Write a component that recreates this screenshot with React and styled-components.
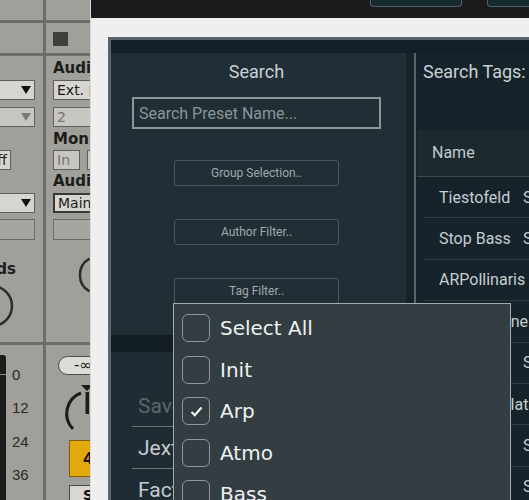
import React from 'react'
import styled, { createGlobalStyle } from 'styled-components'

const GlobalStyle = createGlobalStyle`
  html, body {
    margin: 0;
    padding: 0;
    background: #efefef;
  }
  body {
    font-family: Roboto, "Liberation Sans", sans-serif;
  }
`

const Page = styled.div`
  position: relative;
  display: flex;
  width: 529px;
  height: 500px;
  overflow: hidden;
`

/* ---------- Live device strip on the left ---------- */

const Live = styled.div`
  flex: 0 0 90px;
  display: grid;
  grid-template-columns: 43px 44px;
  grid-template-rows: 20px 30px 286px 1fr;
  gap: 3px;
  background: #6e6d69;
  font-family: "DejaVu Sans", Verdana, sans-serif;
  color: #1c1c1a;
`
const Cell = styled.div`
  background: #a09f9a;
  overflow: hidden;
  min-width: 0;
  display: flex;
  flex-direction: ${p => (p.$row ? 'row' : 'column')};
  box-sizing: border-box;
  padding: ${p => p.$pad || '0'};
`
const ArmSquare = styled.div`
  width: 15px;
  height: 14px;
  margin: 9px 0 0 7px;
  background: #403f3b;
`
const Drop = styled.div`
  flex: none;
  display: flex;
  align-items: center;
  justify-content: ${p => (p.$end ? 'flex-end' : 'flex-start')};
  box-sizing: border-box;
  width: ${p => p.$w || 45}px;
  height: ${p => p.$h || 20}px;
  margin: ${p => p.$m || '0'};
  padding: 0 3px 0 3px;
  background: ${p => (p.$dim ? '#c7c6c0' : '#d6d5cf')};
  border: ${p => (p.$heavy ? '2px solid #3a3935' : '1px solid #5f5e5a')};
  font-size: 14px;
  color: ${p => (p.$dim ? '#76756f' : '#1c1c1a')};
  white-space: nowrap;
`
const Arrow = styled.span`
  width: 0;
  height: 0;
  border-left: 5px solid transparent;
  border-right: 5px solid transparent;
  border-top: 8px solid ${p => (p.$dim ? '#7c7b76' : '#111')};
`
const Blank = styled.div`
  flex: none;
  box-sizing: border-box;
  width: 50px;
  height: 21px;
  margin: ${p => p.$m || '0'};
  background: #a6a59f;
  border: 1px solid #6c6b66;
`
const LiveLabel = styled.div`
  flex: none;
  font-size: 15px;
  font-weight: bold;
  line-height: 16px;
  white-space: nowrap;
  margin-top: ${p => p.$mt || 0}px;
`
const SendsLabel = styled(LiveLabel)`
  width: 60px;
  margin-left: -44px;
  text-align: right;
  line-height: 18px;
`
const InRow = styled.div`
  display: flex;
  gap: 7px;
  margin-top: 3px;
`
const Meter = styled.div`
  flex: 0 0 6px;
  margin-top: 10px;
  border-radius: 0 3px 0 0;
  background: linear-gradient(#1d1d1b 0 19px, #8a8985 19px 20px, #1d1d1b 20px);
`
const Scale = styled.div`
  margin-left: 6px;
  padding-top: 13px;
  font-family: "Liberation Sans", Arial, sans-serif;
  font-size: 15px;
  line-height: 33.3px;
  color: #2a2a28;
`
const Pill = styled.div`
  width: 52px;
  height: 19px;
  margin-left: 12px;
  box-sizing: border-box;
  border: 1px solid #4c4b47;
  border-radius: 10px;
  background: #dddcd6;
  font-size: 15px;
  line-height: 17px;
  padding-left: 15px;
  white-space: nowrap;
`
const ClipBox = styled.div`
  flex: none;
  width: 40px;
  height: ${p => p.$h}px;
  margin: ${p => p.$m};
  box-sizing: border-box;
  padding-left: 13px;
  background: ${p => p.$bg};
  border: 1px solid ${p => p.$line};
  font-size: ${p => p.$fs}px;
  font-weight: bold;
  line-height: ${p => p.$h - 2}px;
  color: #111;
`

const SendKnob = () => (
  <svg width="43" height="50" style={{ marginTop: 3, flex: 'none' }}>
    <circle cx="-8" cy="25" r="20" fill="none" stroke="#2d2c29" strokeWidth="2.5" />
  </svg>
)

const PanKnob = () => (
  <svg width="44" height="52" style={{ marginTop: 8, flex: 'none' }}>
    <path d="M36.5 10.5 A19 19 0 0 0 36.5 43.5" fill="none" stroke="#2d2c29" strokeWidth="2.5" />
    <path d="M38 45 L43 38" stroke="#2d2c29" strokeWidth="2.5" />
  </svg>
)

const VolKnob = () => (
  <svg width="44" height="56" style={{ marginTop: 8, flex: 'none' }}>
    <polygon points="35,2 47,2 41,8" fill="#1c1c1a" />
    <rect x="39.5" y="9" width="3.5" height="22" fill="#1c1c1a" />
    <path d="M35 10 A22 22 0 0 0 27 46" fill="none" stroke="#1c1c1a" strokeWidth="3" />
  </svg>
)

/* ---------- Host window + plugin ---------- */

const Host = styled.div`
  flex: 1;
  min-width: 0;
  display: flex;
  flex-direction: column;
  background: #efefef;
  border-left: 1px solid #d9d9d9;
`
const TitleBar = styled.div`
  flex: 0 0 18px;
  display: flex;
  gap: 25px;
  padding-left: 279px;
  background: #1b1b1b;
`
const BarButton = styled.div`
  flex: none;
  width: ${p => p.$w}px;
  height: 7px;
  box-sizing: border-box;
  background: #16292d;
  border: 1px solid #4b646a;
  border-top: none;
  border-radius: 0 0 4px 4px;
`
const Frame = styled.div`
  flex: 1;
  display: flex;
  padding: 19px 0 0 17px;
  min-height: 0;
  overflow: hidden;
`
const Plugin = styled.div`
  flex: none;
  width: 700px;
  display: flex;
  flex-direction: column;
  border-top: 3px solid #59636a;
  border-left: 3px solid #59636a;
  background: #17232a;
`
const Strip = styled.div`
  flex: 0 0 13px;
  background: #132027;
`
const Body = styled.div`
  flex: 1;
  display: flex;
`
const LeftCol = styled.div`
  flex: 0 0 295px;
  display: flex;
  flex-direction: column;
`
const SearchPanel = styled.div`
  flex: 0 0 282px;
  box-sizing: border-box;
  display: flex;
  flex-direction: column;
  align-items: center;
  padding: 8px 4px 0 0;
  background: #212e35;
`
const PanelTitle = styled.div`
  font-size: 18px;
  line-height: 22px;
  color: #c9d1d4;
`
const SearchInput = styled.input`
  width: 249px;
  height: 32px;
  margin-top: 14px;
  box-sizing: border-box;
  padding: 0 5px;
  border: 2px solid #8c979c;
  background: transparent;
  font-family: Roboto, sans-serif;
  font-size: 16px;
  color: #c9d1d4;
  outline: none;
  &::placeholder {
    color: #8a959a;
  }
`
const ButtonStack = styled.div`
  display: flex;
  flex-direction: column;
  gap: 33px;
  margin-top: 31px;
`
const FilterButton = styled.button`
  width: 165px;
  height: 26px;
  border: 1px solid #4a5960;
  border-radius: 3px;
  background: transparent;
  font-family: Roboto, sans-serif;
  font-size: 12px;
  color: #a0aaae;
  padding: 0;
`
const Band = styled.div`
  flex: 0 0 17px;
  background: #121d22;
`
const SaveList = styled.div`
  flex: 1;
  padding: 33px 25px 0 21px;
  background: #1f2c33;
`
const SaveRow = styled.div`
  height: 42px;
  box-sizing: border-box;
  display: flex;
  align-items: center;
  padding: 0 0 0 6px;
  border-bottom: 1px solid #68737a;
  font-size: 21px;
  color: ${p => (p.$muted ? '#5c676c' : '#c3cbcf')};
  white-space: nowrap;
`
const Gutter = styled.div`
  flex: 0 0 8px;
`
const Divider = styled.div`
  flex: 0 0 2px;
  background: #5a666b;
`
const RightCol = styled.div`
  flex: 0 0 300px;
  display: flex;
  flex-direction: column;
`
const TagsTitle = styled.div`
  margin: 8px 0 0 7px;
  font-size: 18px;
  line-height: 22px;
  color: #c9d1d4;
  white-space: nowrap;
`
const Table = styled.div`
  margin: 47px 0 0 1px;
`
const HeaderRow = styled.div`
  height: 47px;
  box-sizing: border-box;
  padding-left: 15px;
  background: #1c292f;
  border-bottom: 1px solid #3f4b51;
  font-size: 16px;
  line-height: 46px;
  color: #c3cbcf;
`
const PresetRow = styled.div`
  display: flex;
  align-items: center;
  height: 41.4px;
  box-sizing: border-box;
  margin-left: 6px;
  padding-left: 16px;
  border-bottom: 1px solid #2f3d45;
  font-size: 16px;
  color: #c5cdd1;
  white-space: nowrap;
`
const NameCell = styled.div`
  flex: 0 0 84px;
`
const TypeCell = styled.div`
  flex: none;
`

/* ---------- Tag dropdown ---------- */

const TagMenu = styled.div`
  position: absolute;
  left: 173px;
  top: 303px;
  width: 338px;
  height: 220px;
  box-sizing: border-box;
  display: flex;
  flex-direction: column;
  gap: 13.5px;
  padding: 10px 0 0 8px;
  background: #343e42;
  border: 1px solid #a4acaf;
`
const MenuItem = styled.div`
  display: flex;
  align-items: center;
  gap: 10px;
  height: 28px;
  font-family: "DejaVu Sans", sans-serif;
  font-size: 20px;
  color: #eef1f2;
`
const Check = styled.div`
  flex: none;
  width: 28px;
  height: 28px;
  box-sizing: border-box;
  display: grid;
  place-items: center;
  border: 1.5px solid #8e989b;
  border-radius: 6px;
`

const presets = [
  ['Tiestofeld', 'Synth'],
  ['Stop Bass', 'Synth'],
  ['ARPollinaris', ''],
  ['Old Machine', ''],
  ['Sub Drop', 'Synth'],
  ['Bubble Splat', ''],
  ['Lead Saw', 'Synth'],
  ['Pluck Me', 'Synth'],
]

const tags = [
  ['Select All', false],
  ['Init', false],
  ['Arp', true],
  ['Atmo', false],
  ['Bass', false],
]

export default function App() {
  return (
    <Page>
      <GlobalStyle />
      <Live>
        <Cell />
        <Cell />
        <Cell />
        <Cell>
          <ArmSquare />
        </Cell>
        <Cell $pad="24px 0 0 0">
          <Drop $m="0 0 0 -10px" $end><Arrow /></Drop>
          <Drop $m="7px 0 0 -10px" $end $dim><Arrow $dim /></Drop>
          <Drop $w={30} $m="23px 0 0 -19px" $end>Off</Drop>
          <Drop $m="23px 0 0 -10px" $end><Arrow /></Drop>
          <Blank $m="6px 0 0 -15px" />
          <SendsLabel $mt={20}>Sends</SendsLabel>
          <SendKnob />
        </Cell>
        <Cell $pad="4px 0 0 7px">
          <LiveLabel>Audio From</LiveLabel>
          <Drop $w={60} $m="4px 0 0 0">Ext. In</Drop>
          <Drop $w={60} $m="7px 0 0 0" $dim>2</Drop>
          <LiveLabel $mt={4}>Monitor</LiveLabel>
          <InRow>
            <Drop $w={27} $dim>In</Drop>
            <Drop $w={40} $dim>Auto</Drop>
          </InRow>
          <LiveLabel $mt={3}>Audio To</LiveLabel>
          <Drop $w={60} $m="4px 0 0 0" $heavy>Main</Drop>
          <Blank $m="6px 0 0 0" />
          <PanKnob />
        </Cell>
        <Cell $row>
          <Meter />
          <Scale>
            <div>0</div>
            <div>12</div>
            <div>24</div>
            <div>36</div>
            <div>48</div>
          </Scale>
        </Cell>
        <Cell $pad="11px 0 0 0">
          <Pill>-∞</Pill>
          <VolKnob />
          <ClipBox $h={37} $m="1px 0 0 23px" $bg="#e1a90c" $line="#7d5e05" $fs={16}>4</ClipBox>
          <ClipBox $h={20} $m="8px 0 0 23px" $bg="#d8d7d1" $line="#4a4946" $fs={14}>S</ClipBox>
        </Cell>
      </Live>

      <Host>
        <TitleBar>
          <BarButton $w={92} />
          <BarButton $w={60} />
        </TitleBar>
        <Frame>
          <Plugin>
            <Strip />
            <Body>
              <LeftCol>
                <SearchPanel>
                  <PanelTitle>Search</PanelTitle>
                  <SearchInput placeholder="Search Preset Name..." />
                  <ButtonStack>
                    <FilterButton>Group Selection..</FilterButton>
                    <FilterButton>Author Filter..</FilterButton>
                    <FilterButton>Tag Filter..</FilterButton>
                  </ButtonStack>
                </SearchPanel>
                <Band />
                <SaveList>
                  <SaveRow $muted>Save Preset As..</SaveRow>
                  <SaveRow>Jexter</SaveRow>
                  <SaveRow>Factory</SaveRow>
                </SaveList>
              </LeftCol>
              <Gutter />
              <Divider />
              <RightCol>
                <TagsTitle>Search Tags:</TagsTitle>
                <Table>
                  <HeaderRow>Name</HeaderRow>
                  {presets.map(([name, type]) => (
                    <PresetRow key={name}>
                      <NameCell>{name}</NameCell>
                      <TypeCell>{type}</TypeCell>
                    </PresetRow>
                  ))}
                </Table>
              </RightCol>
            </Body>
          </Plugin>
        </Frame>
      </Host>

      <TagMenu>
        {tags.map(([label, on]) => (
          <MenuItem key={label}>
            <Check>
              {on && (
                <svg width="13" height="11" viewBox="0 0 13 11">
                  <polyline points="1.5,6 4.8,9.2 11.5,1.5" fill="none" stroke="#f2f4f5" strokeWidth="2.2" />
                </svg>
              )}
            </Check>
            {label}
          </MenuItem>
        ))}
      </TagMenu>
    </Page>
  )
}
